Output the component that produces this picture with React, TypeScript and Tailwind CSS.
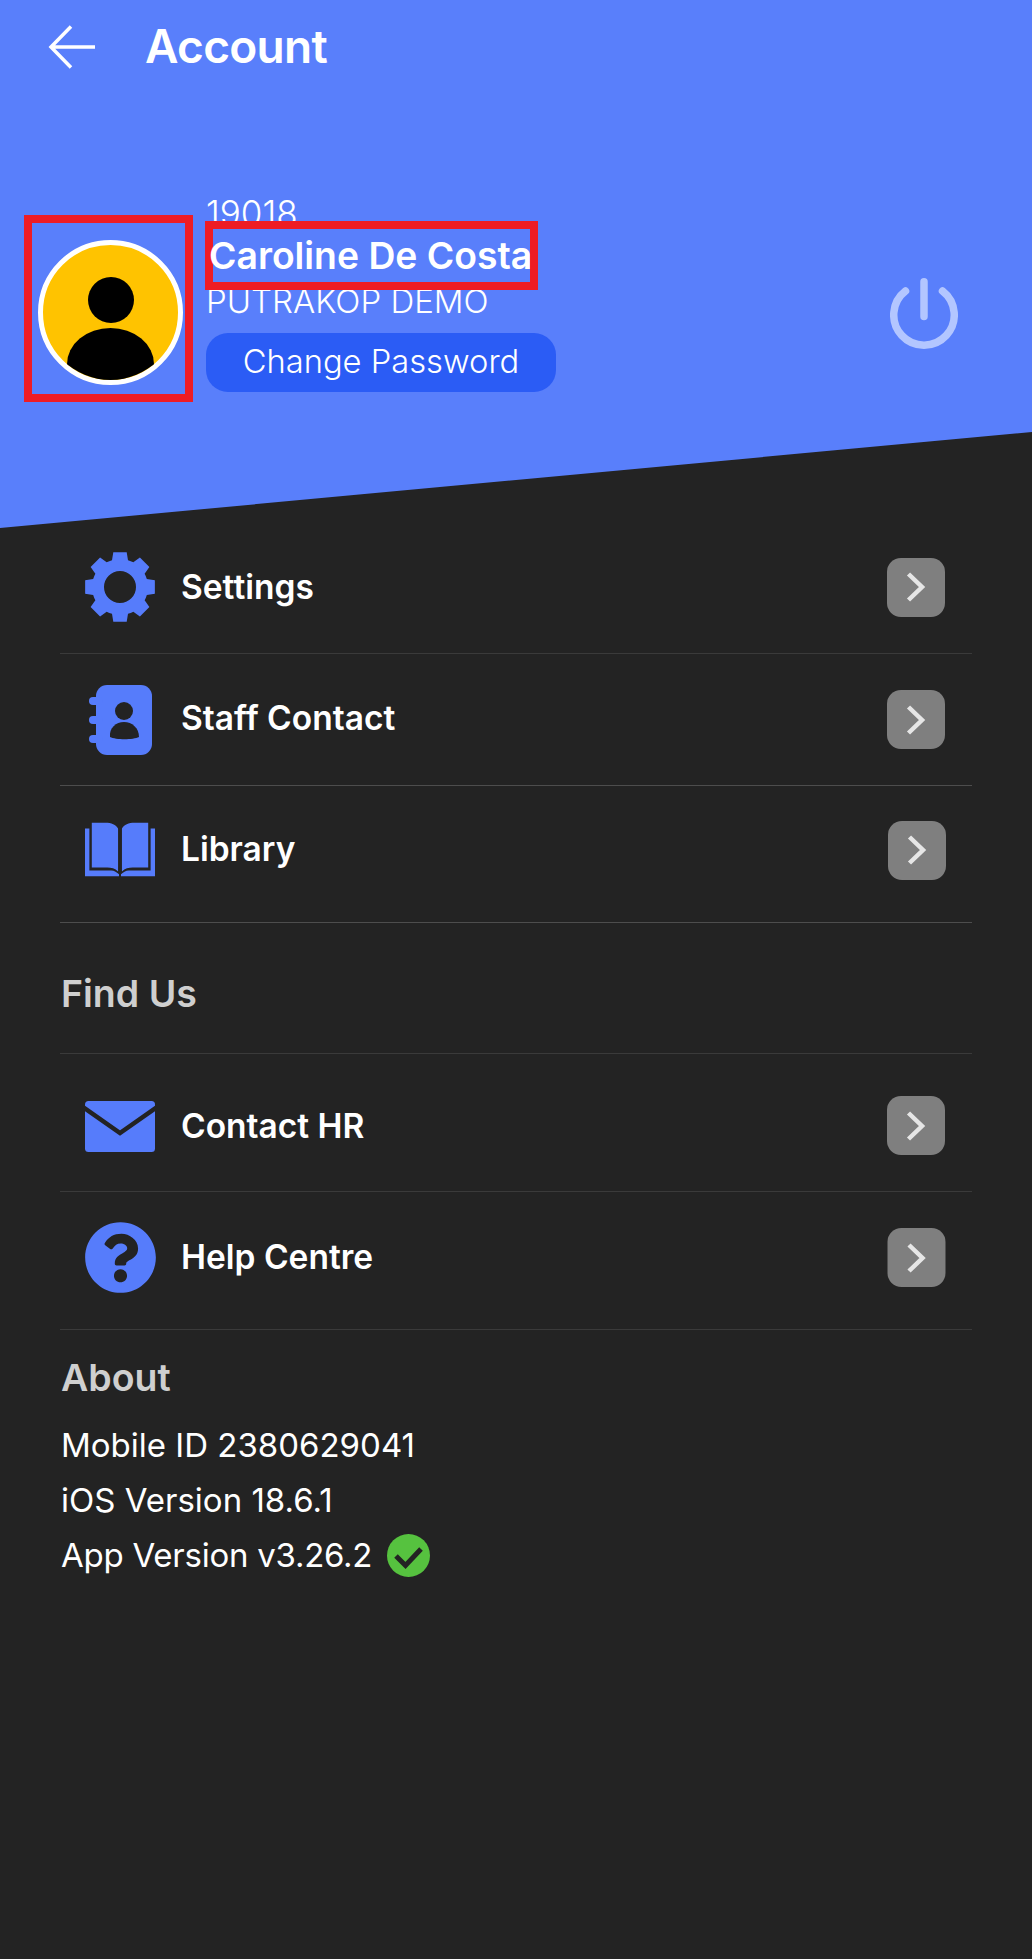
import React from "react";
import { FaQuestionCircle } from "react-icons/fa";

const gearPath = () => {
  const c = 35, teeth = 8;
  const pt = (r: number, a: number) => `${(c + r * Math.sin(a)).toFixed(2)} ${(c - r * Math.cos(a)).toFixed(2)}`;
  let d = "";
  for (let i = 0; i < teeth; i++) {
    const a = (i * 2 * Math.PI) / teeth;
    const w1 = 0.29, w2 = 0.19, R = 35.5, r = 28;
    d += `${i === 0 ? "M" : "L"}${pt(r, a - w1)} L${pt(R, a - w2)} L${pt(R, a + w2)} L${pt(r, a + w1)} `;
    d += `A${r} ${r} 0 0 1 ${pt(r, a + Math.PI / 4 - w1)} `;
  }
  d += "Z M35 19 A16 16 0 1 0 35 51 A16 16 0 1 0 35 19 Z";
  return d;
};

const Gear = () => (
  <svg width="70" height="70" viewBox="0 0 70 70">
    <path d={gearPath()} fill="#567cfb" fillRule="evenodd" />
  </svg>
);

const ContactBook = () => (
  <svg width="70" height="70" viewBox="0 0 70 70">
    <rect x="11" y="0" width="56" height="70" rx="11" fill="#567cfb" />
    <rect x="4" y="12" width="14" height="8" rx="4" fill="#567cfb" />
    <rect x="4" y="31" width="14" height="8" rx="4" fill="#567cfb" />
    <rect x="4" y="50" width="14" height="8" rx="4" fill="#567cfb" />
    <circle cx="39" cy="26" r="9" fill="#232323" />
    <path d="M25 52 C24 43 31 37 39 37 C47 37 54 43 54 52 C48 55 31 55 25 52 Z" fill="#232323" />
  </svg>
);

const Book = () => (
  <svg width="72" height="56" viewBox="0 0 72 56">
    <path d="M0 6 H4.5 V49 H27 C30 49 33 51 35 53 V55 H0 Z" fill="#567cfb" />
    <path d="M72 6 H67.5 V49 H45 C42 49 39 51 37 53 V55 H72 Z" fill="#567cfb" />
    <path d="M7 0 H21 C27 0 32 2 34 6 V50 C31 47 27 46 23 46 H7 Z" fill="#567cfb" />
    <path d="M65 0 H51 C45 0 40 2 38 6 V50 C41 47 45 46 49 46 H65 Z" fill="#567cfb" />
  </svg>
);

const Mail = () => (
  <svg width="70" height="52" viewBox="0 0 70 52">
    <rect x="0" y="0" width="70" height="51" rx="3.5" fill="#567cfb" />
    <path d="M-2 6 L35 32 L72 6" fill="none" stroke="#232323" strokeWidth="4.5" />
  </svg>
);

const Chevron = ({ className = "" }: { className?: string }) => (
  <div className={`flex h-[59px] w-[58px] shrink-0 items-center justify-center rounded-[14px] bg-[#7f7f7f] ${className}`}>
    <svg width="20" height="30" viewBox="0 0 20 30">
      <path d="M2.5 2 L16 15 L2.5 28" fill="none" stroke="#e6e6e6" strokeWidth="4.5" />
    </svg>
  </div>
);

const Row = ({
  icon,
  label,
  className = "",
  chevron = "",
  labelClass = "",
}: {
  icon: React.ReactNode;
  label: string;
  className?: string;
  chevron?: string;
  labelClass?: string;
}) => (
  <div className={`flex items-center border-b-[1.5px] pl-[25px] pr-[27px] ${className}`}>
    <div className="flex w-[70px] shrink-0 items-center justify-center">{icon}</div>
    <span className={`ml-[26px] flex-1 text-[33.5px] font-semibold leading-none text-white ${labelClass}`}>{label}</span>
    <Chevron className={chevron} />
  </div>
);

export default function App() {
  return (
    <div className="h-[1959px] w-[1032px] overflow-hidden bg-[#232323] font-['Inter',sans-serif]">
      <header className="h-[528px] bg-[#597ffb] [clip-path:polygon(0_0,100%_0,100%_432px,0_528px)]">
        <div className="flex items-center pl-[48px] pt-[24px]">
          <svg width="48" height="44" viewBox="0 0 48 44">
            <path d="M47 22 H3 M23 1.5 L3 22 L23 42.5" fill="none" stroke="#ffffff" strokeWidth="3.5" />
          </svg>
          <h1 className="ml-[49px] -translate-y-[1px] text-[46px] font-semibold leading-none tracking-[-0.7px] text-white">Account</h1>
        </div>
        <div className="relative mt-[145px] flex items-start pl-[24px]">
          <div className="h-[187px] w-[169px] shrink-0 border-[8px] border-[#ee1c25] pl-[6px] pt-[17px]">
            <div className="relative h-[145px] w-[145px] overflow-hidden rounded-full border-[5px] border-white bg-[#ffc300]">
              <div className="absolute left-[45px] top-[32px] h-[46px] w-[46px] rounded-full bg-black" />
              <div className="absolute left-[24px] top-[83px] h-[90px] w-[87px] bg-black [border-radius:43.5px_43.5px_0_0/36px_36px_0_0]" />
            </div>
          </div>
          <div className="ml-[13px] -mt-[22px] flex flex-col items-start">
            <div className="h-[28px] text-[35px] font-light leading-[40px] text-white">19018</div>
            <div className="relative z-10 -ml-[1px] h-[69px] w-[333px] whitespace-nowrap border-[8px] border-[#ee1c25] indent-[-4px] text-[37.3px] font-semibold leading-[53px] text-white">
              Caroline De Costa
            </div>
            <div className="-mt-[7px] h-[36px] text-[33px] font-light leading-[36px] text-white">PUTRAKOP DEMO</div>
            <button className="mt-[14px] flex h-[59px] w-[350px] items-center justify-center rounded-[22px] bg-[#2b5cf5] pb-[3px] text-[32.7px] font-light leading-none text-white">
              Change Password
            </button>
          </div>
          <svg className="absolute left-[890px] top-[63px]" width="68" height="71" viewBox="0 0 68 71">
            <path
              d="M15.5 13 A30.25 30.25 0 1 0 52.5 13 M34 3.75 V38.5"
              fill="none"
              stroke="#b3c6ff"
              strokeWidth="7.5"
              strokeLinecap="round"
            />
          </svg>
        </div>
      </header>

      <main className="mx-[60px] w-[912px]">
        <Row icon={<Gear />} label="Settings" className="h-[126px] border-[#3a3a3a] pb-[7px]" labelClass="translate-y-[1px]" />
        <Row icon={<ContactBook />} label="Staff Contact" className="h-[132px] border-[#4d4d4d]" labelClass="-translate-y-[1px]" />
        <Row icon={<Book />} label="Library" className="h-[137px] border-[#4d4d4d] pb-[8px]" chevron="translate-x-[1px]" />

        <div className="flex h-[131px] items-center border-b-[1.5px] border-[#3a3a3a] pl-[1px] pt-[12px] text-[37.5px] font-semibold leading-none text-[#cfcfcf]">
          Find Us
        </div>

        <Row icon={<div className="translate-y-[1px]"><Mail /></div>} label="Contact HR" className="h-[138px] border-[#3a3a3a] pt-[6px]" labelClass="translate-y-[1px]" />
        <Row icon={<FaQuestionCircle size={73} color="#567cfb" className="shrink-0" />} label="Help Centre" className="h-[138px] border-[#3a3a3a] pb-[6px]" chevron="translate-x-[0.5px]" />

        <section className="pl-[1px] pt-[26px]">
          <h2 className="text-[37.5px] font-semibold leading-[44px] text-[#cfcfcf]">About</h2>
          <div className="mt-[18px] text-[33px] font-normal leading-[55px] text-white">
            <p className="h-[55px]">Mobile ID 2380629041</p>
            <p className="h-[55px]">iOS Version 18.6.1</p>
            <p className="flex h-[55px] items-center tracking-[-0.25px]">
              App Version v3.26.2
              <svg className="ml-[15px]" width="43" height="43" viewBox="0 0 43 43">
                <circle cx="21.5" cy="21.5" r="21.5" fill="#56c23f" />
                <path d="M9 22 L18.5 31.5 L34 15" fill="none" stroke="#232323" strokeWidth="5" />
              </svg>
            </p>
          </div>
        </section>
      </main>
    </div>
  );
}
